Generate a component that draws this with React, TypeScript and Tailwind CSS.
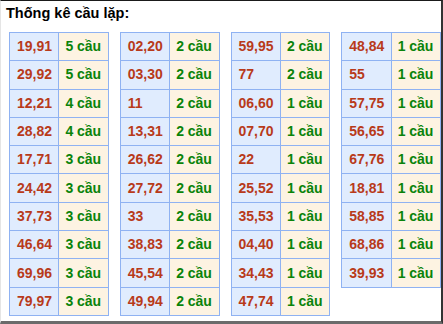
import React from "react";

type Item = [string, string];

const cols: Item[][] = [
  [
    ["19,91", "5 cầu"],
    ["29,92", "5 cầu"],
    ["12,21", "4 cầu"],
    ["28,82", "4 cầu"],
    ["17,71", "3 cầu"],
    ["24,42", "3 cầu"],
    ["37,73", "3 cầu"],
    ["46,64", "3 cầu"],
    ["69,96", "3 cầu"],
    ["79,97", "3 cầu"],
  ],
  [
    ["02,20", "2 cầu"],
    ["03,30", "2 cầu"],
    ["11", "2 cầu"],
    ["13,31", "2 cầu"],
    ["26,62", "2 cầu"],
    ["27,72", "2 cầu"],
    ["33", "2 cầu"],
    ["38,83", "2 cầu"],
    ["45,54", "2 cầu"],
    ["49,94", "2 cầu"],
  ],
  [
    ["59,95", "2 cầu"],
    ["77", "2 cầu"],
    ["06,60", "1 cầu"],
    ["07,70", "1 cầu"],
    ["22", "1 cầu"],
    ["25,52", "1 cầu"],
    ["35,53", "1 cầu"],
    ["04,40", "1 cầu"],
    ["34,43", "1 cầu"],
    ["47,74", "1 cầu"],
  ],
  [
    ["48,84", "1 cầu"],
    ["55", "1 cầu"],
    ["57,75", "1 cầu"],
    ["56,65", "1 cầu"],
    ["67,76", "1 cầu"],
    ["18,81", "1 cầu"],
    ["58,85", "1 cầu"],
    ["68,86", "1 cầu"],
    ["39,93", "1 cầu"],
  ],
];

export default function App() {
  return (
    <div
      className="w-[443px] h-[324px] bg-white border-t border-t-[#1a1a1a] border-r-2 border-r-[#333333] border-b-[3px] border-b-[#6b6b6b] border-l border-l-[#e5e5e5] overflow-hidden"
      style={{ fontFamily: '"Liberation Sans", Arial, sans-serif' }}
    >
      <div className="pl-[5px] pt-[4px] h-[31px] text-[14.5px] leading-[17px] font-bold text-black">
        Thống kê cầu lặp:
      </div>
      <div className="grid grid-cols-4 gap-x-[11px] pl-[8px] pr-0 items-start w-[440px]">
        {cols.map((col, ci) => (
          <div key={ci} className="border-t border-l border-[#8fb2f2]">
            {col.map(([num, cau], ri) => (
              <div key={ri} className="flex h-[28.3px] box-border border-b border-[#8fb2f2]">
                <div className="w-1/2 bg-[#e0ecfe] border-r border-[#8fb2f2] flex items-center pl-[7px] text-[14px] font-bold text-[#b83a1a]">
                  {num}
                </div>
                <div className="w-1/2 bg-[#fdf3e2] border-r border-[#8fb2f2] flex items-center pl-[6px] text-[14px] font-bold text-[#0a830a]">
                  {cau}
                </div>
              </div>
            ))}
          </div>
        ))}
      </div>
    </div>
  );
}
